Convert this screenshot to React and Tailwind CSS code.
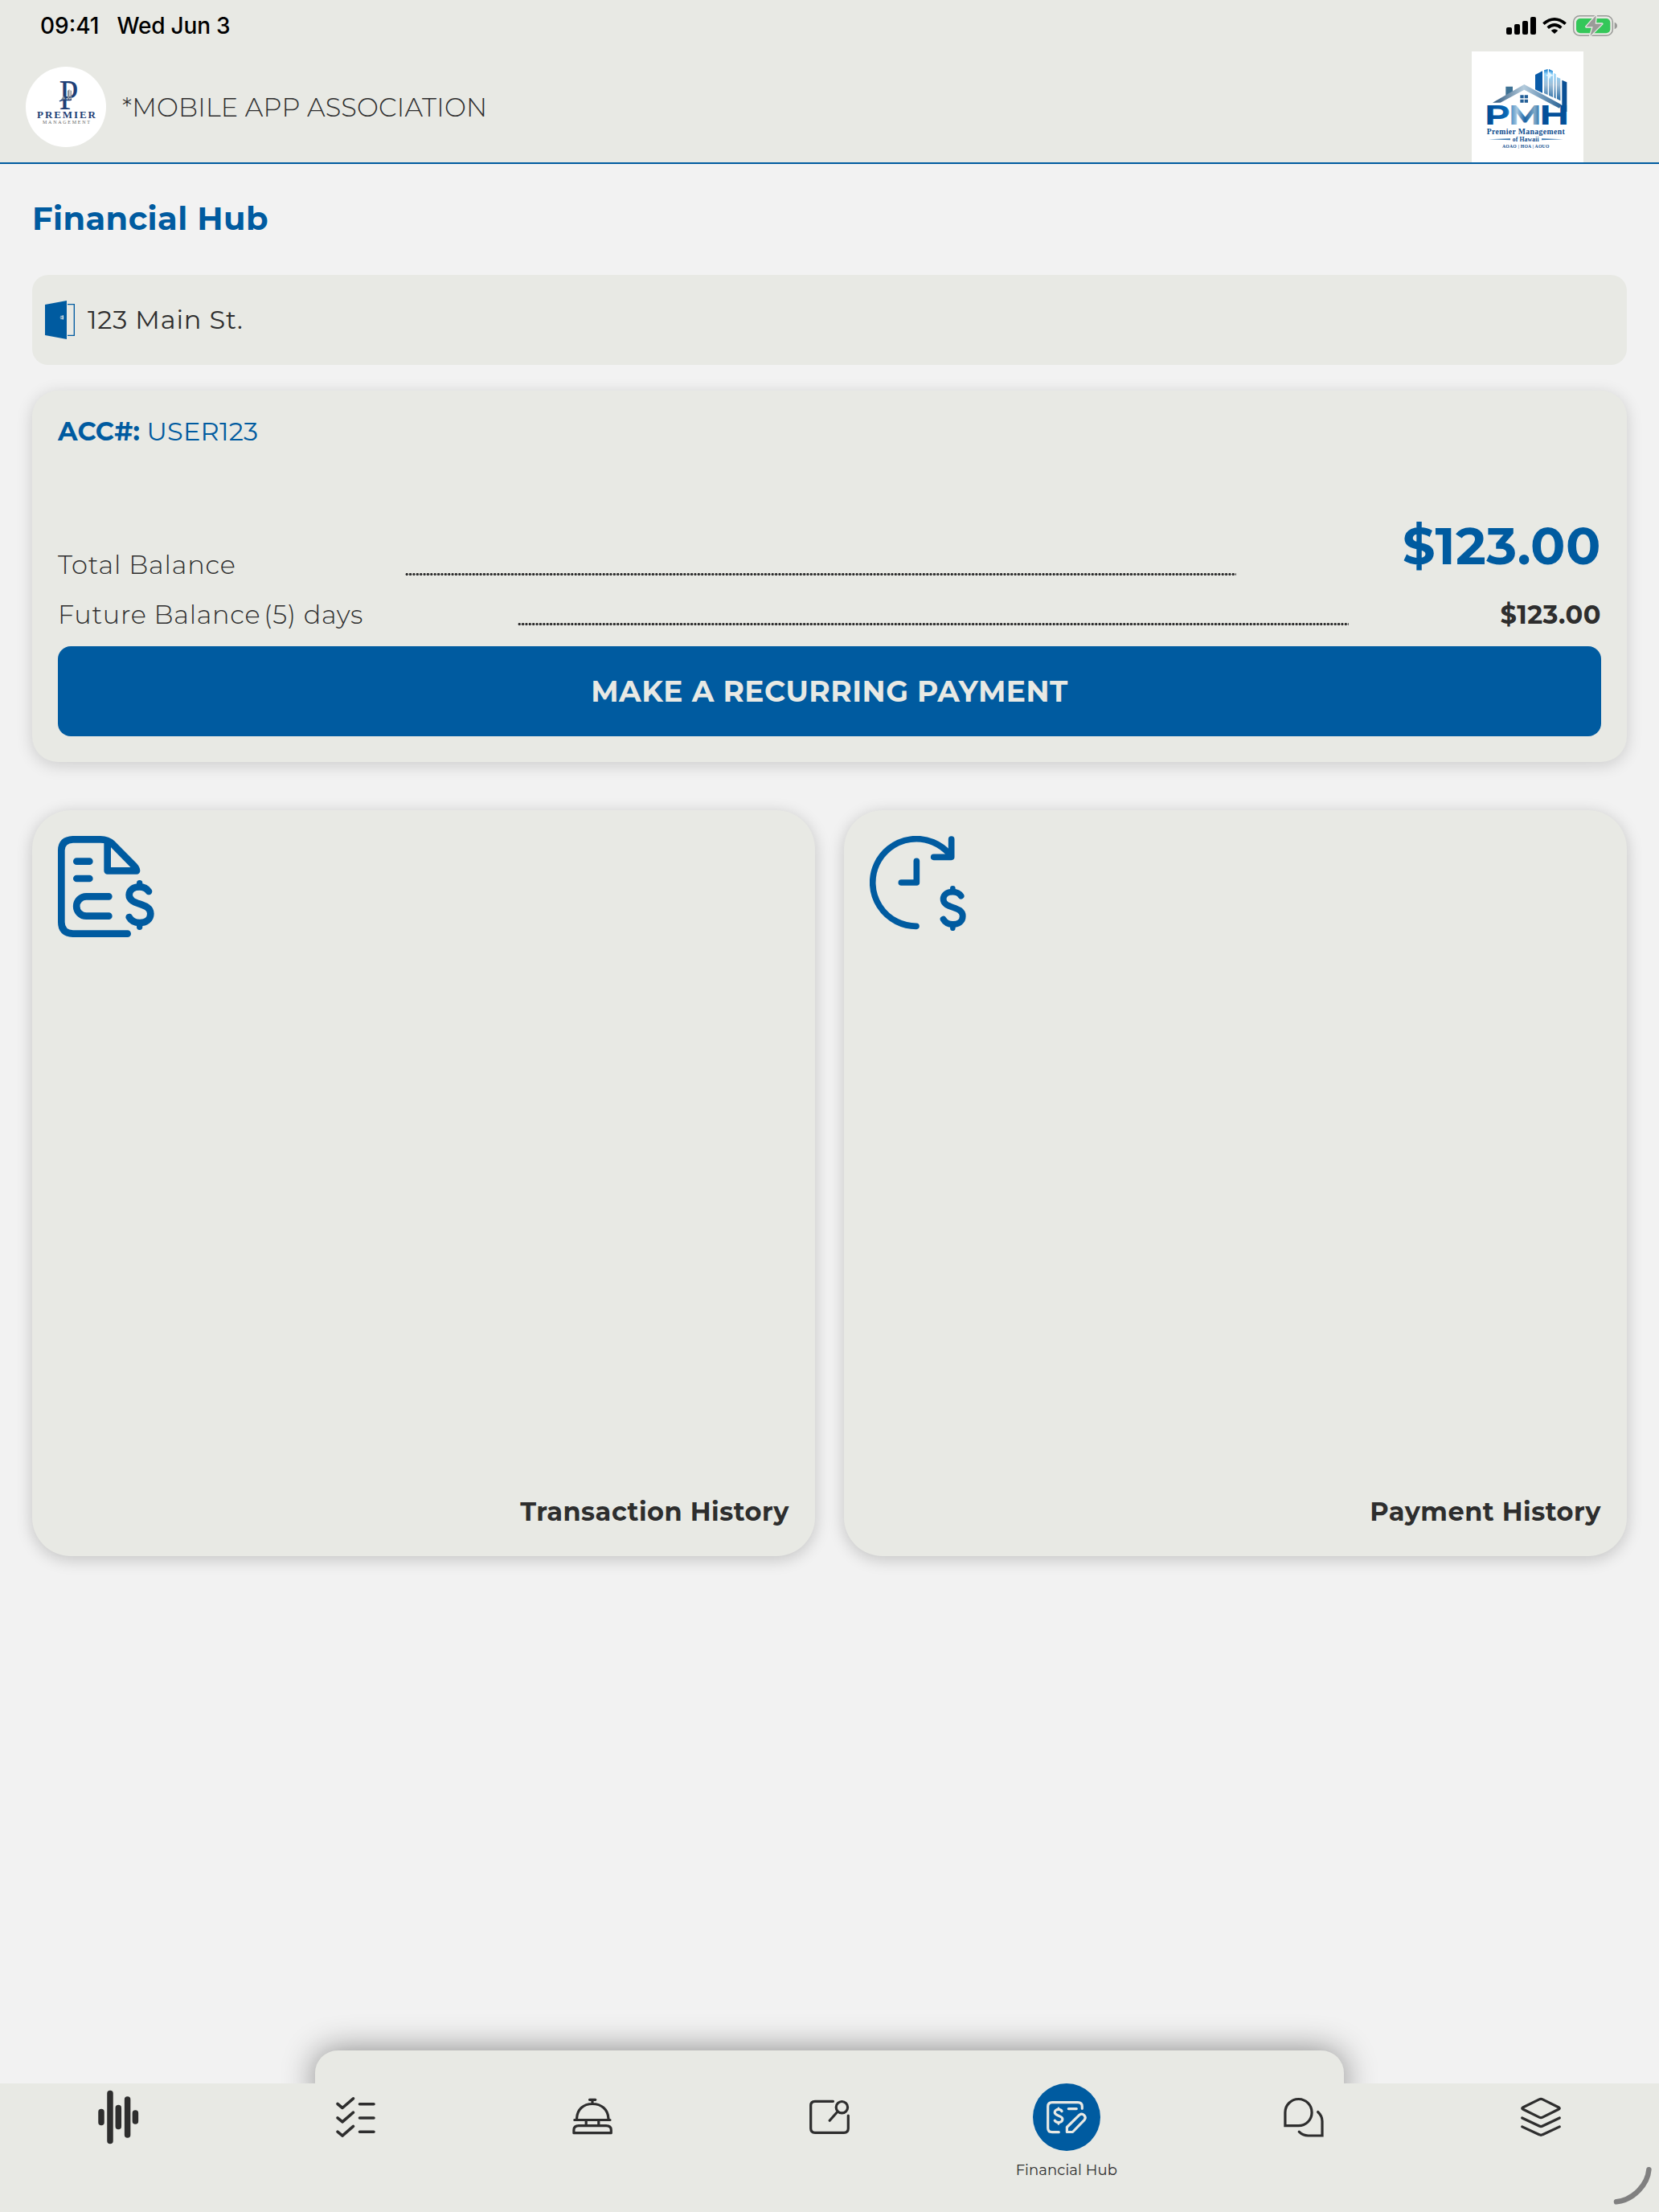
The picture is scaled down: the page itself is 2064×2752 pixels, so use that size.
import React, { useState } from "react";

const StatusIcons = () => (
  <svg className="h-8 w-[138px]" viewBox="282 48 414 96" fill="none">
    <g fill="#000">
      <rect x="282" y="102" width="21" height="27" rx="6" />
      <rect x="312" y="90" width="21" height="39" rx="6" />
      <rect x="342" y="78" width="21" height="51" rx="6" />
      <rect x="372" y="63" width="21" height="66" rx="6" />
      <path d="M449 114q13-11 26 0l-13 12z" />
    </g>
    <g stroke="#000" strokeWidth="11">
      <path d="M421 89q41-35 82 0" />
      <path d="M437 104q25-22 50 0" />
    </g>
    <rect x="533" y="59" width="146" height="74" rx="23" stroke="#9a9b98" strokeWidth="4.5" />
    <rect x="543" y="69" width="127" height="55" rx="15" fill="#34c759" />
    <path d="M686 83q10 4 10 13t-10 13z" fill="#9a9b98" />
    <path
      d="M617 58L580 100h25l-10 34 45-45h-26z"
      fill="#9a9b98"
      stroke="#e8e9e4"
      strokeWidth="8"
      paintOrder="stroke"
      strokeLinejoin="round"
    />
  </svg>
);

const PremierLogo = () => (
  <svg className="size-[100px] rounded-full bg-white" viewBox="0 0 100 100">
    <g fill="#1f3f77" fontFamily="Liberation Serif, serif">
      <text x="41.500" y="52.500" fontSize="52" textLength="24" lengthAdjust="spacingAndGlyphs">P</text>
      <text x="14" y="64" fontSize="13" fontWeight="bold" textLength="73">PREMIER</text>
      <text x="21" y="70.500" fontSize="6" fill="#666" textLength="59">MANAGEMENT</text>
    </g>
    <path d="M52 41V30l2.500-2V41zM55.500 41V29l1.500 1v11zM44 41l3-5 3 5z" fill="#8b8f96" />
    <path d="M42 43c5-4 9 0 15-2" stroke="#1f3f77" strokeWidth="1.500" fill="none" />
  </svg>
);

const PmhLogo = () => (
  <svg className="h-[138px] w-[139px] bg-white" viewBox="153 192 417 414">
    <defs>
      <linearGradient id="roof" x1="0" x2="1">
        <stop offset="0" stopColor="#2d567c" />
        <stop offset="0.45" stopColor="#b4cbdc" />
        <stop offset="1" stopColor="#2a6496" />
      </linearGradient>
      <linearGradient id="letters" gradientUnits="userSpaceOnUse" x1="208" x2="508" y1="0" y2="0">
        <stop offset="0" stopColor="#024a94" />
        <stop offset="0.25" stopColor="#0767b5" />
        <stop offset="0.38" stopColor="#a9c8df" />
        <stop offset="0.48" stopColor="#1a62a4" />
        <stop offset="0.6" stopColor="#7fa9c6" />
        <stop offset="0.7" stopColor="#04509a" />
        <stop offset="1" stopColor="#04509a" />
      </linearGradient>
      <linearGradient id="tower" x1="0" x2="0" y1="0" y2="1">
        <stop offset="0" stopColor="#0b72c4" />
        <stop offset="0.15" stopColor="#8fd3fb" />
        <stop offset="0.5" stopColor="#9fbfd8" />
        <stop offset="1" stopColor="#256aa4" />
      </linearGradient>
    </defs>
    <path d="M390 279l27-14v82l-27-13z" fill="#0a5ba8" />
    <path d="M423 262l14-4v96l-14-6zM441 258l15 7v98l-15-7zM460 273l7 4v91l-7-4zM471 288l13 5v83l-13-7z" fill="url(#tower)" />
    <path d="M490 299l18 8v110h-18z" fill="#0a4f94" />
    <path d="M444 266l4 11 11 4-11 4-4 11-4-11-11-4 11-4z" fill="#e6f7ff" />
    <path d="M280 323h26v20l-26 17z" fill="#3d7194" />
    <path d="M231 383L349 315 488 391 480 404 349 335 260 383z" fill="url(#roof)" />
    <path d="M334 355h13v12h-13zM350 355h13v12h-13zM334 371h13v12h-13zM350 371h13v12h-13z" fill="#245f97" />
    <g
      fontFamily="Montserrat, Open Sans, sans-serif"
      fontSize="104"
      fontWeight="700"
      fill="url(#letters)"
    >
      <text x="200" y="466" textLength="97" lengthAdjust="spacingAndGlyphs">P</text>
      <text x="290" y="466" textLength="124" lengthAdjust="spacingAndGlyphs">M</text>
      <text x="405" y="466" textLength="113" lengthAdjust="spacingAndGlyphs">H</text>
    </g>
    <g fontFamily="Liberation Serif, serif" fontWeight="bold" fill="#0b4a8c">
      <text x="209" y="500" fontSize="29" textLength="291">Premier Management</text>
      <text x="305" y="527" fontSize="23" textLength="99">of Hawaii</text>
      <text x="267" y="551" fontSize="17" textLength="175">AOAO | HOA | AOUO</text>
    </g>
    <path d="M216 520l81-3v6zM495 520l-81-3v6z" fill="#3b78b0" />
  </svg>
);

const DoorIcon = () => (
  <svg className="h-12 w-[37px]" viewBox="108 132 111 144">
    <path d="M108 147l81-15v144l-81-15z" fill="#005ba0" />
    <path d="M192 146h25v116h-25" fill="none" stroke="#005ba0" strokeWidth="4" />
    <path d="M164 195h12M166 190h10v10h-10M175 186v17" fill="none" stroke="#e8e9e4" strokeWidth="2.500" />
  </svg>
);

const DollarMark = () => (
  <>
    <path d="M465 357C458 346 446 340 431 340C408 340 392 352 392 370C392 412 472 396 472 440C472 462 454 474 432 474C412 474 400 468 392 453" />
    <path d="M431 326V338M431 476V490" strokeWidth="22" />
  </>
);

const TransactionIcon = () => (
  <svg
    className="h-[126px] w-[120px]"
    viewBox="126 150 360 378"
    fill="none"
    stroke="#005ba0"
    strokeWidth="26"
    strokeLinecap="round"
    strokeLinejoin="round"
  >
    <path d="M386 515H182Q139 513 139 472V203Q140 165 182 163H285Q312 163 330 180L411 262Q420 272 420 280H311V175" />
    <path d="M196 245H244M196 309H244M316 376H232a36.500 36.500 0 0 0 0 73H316" />
    <DollarMark />
  </svg>
);

const PaymentIcon = () => (
  <svg
    className="h-[118px] w-[120px]"
    viewBox="246 150 360 354"
    fill="none"
    stroke="#005ba0"
    strokeWidth="23"
    strokeLinecap="round"
    strokeLinejoin="round"
  >
    <path d="M420 487A163 163 0 1 1 544 218" />
    <path d="M551 162V229H485M421 244V324H364" />
    <g transform="translate(166 51) scale(0.905)" strokeWidth="26">
      <DollarMark />
    </g>
  </svg>
);

const navItems = [
  {
    name: "Home",
    icon: (
      <path
        strokeWidth="7.500"
        d="M21 35.500V48.500M32 12.500V71.500M42.300 30.500V53.500M53.600 20V64M63.400 37V47"
      />
    ),
  },
  {
    name: "Tasks",
    icon: (
      <path
        strokeWidth="3.600"
        d="M20 25.500L26 30.500L39.500 18.800M20 42.800L26 47.800L39.500 36.100M20 60.100L26 65.100L39.500 53.400M47.500 25.700H65M47.500 43H65M47.500 60.300H65"
      />
    ),
  },
  {
    name: "Services",
    icon: (
      <path d="M38.500 20.300H45.800M42 20.500V25M22.500 44C23 32 31 25.500 42 25.500S61.500 32 62 44M19.800 45.500H64M34.200 46V52M49.800 46V52M18.900 61.700V58Q19 52.700 25 52.700H59Q65.300 52.700 65.300 58V61.700Z" />
    ),
  },
  {
    name: "Notes",
    icon: (
      <path d="M46.500 22.300H24Q18.700 22.300 18.700 27.600V56Q18.700 61.300 24 61.300H60Q65.300 61.300 65.300 56V40M51.700 35.500L42.200 46.300M64.600 29.700a7.200 7.200 0 1 1-14.400 0a7.200 7.200 0 1 1 14.400 0" />
    ),
  },
  {
    name: "Financial Hub",
    icon: (
      <>
        <path d="M32.300 60.700H24Q18.700 60.700 18.700 55.500V28.800Q18.700 23.600 24 23.600H56Q61.300 23.600 61.300 28.800V31.300M44.300 31.600H54.300M42.400 60.500V54.500L58 39.200Q61 37 63.800 39.600Q66.500 42.500 64.200 45.300L49.500 60.500Z" />
        <g transform="translate(-20 -8.500) scale(0.1205)" strokeWidth="27">
          <DollarMark />
        </g>
      </>
    ),
  },
  {
    name: "Messages",
    icon: (
      <path
        strokeLinejoin="miter"
        d="M18.900 52.700V35.900A16.600 16.600 0 1 1 35.500 52.700ZM59.600 35.500Q65 40.500 65 47V65H47.600Q41 65 36.200 60.200"
      />
    ),
  },
  {
    name: "More",
    icon: (
      <path d="M40 19.900Q42.100 18.900 44.200 19.900L64.500 30Q66 31 64.500 32L44.200 42.100Q42.100 43.100 40 42.100L19.500 32Q18 31 19.500 30ZM18.700 43L40 53Q42.100 54.200 44.200 53L65.300 43M18.700 53.900L40 63.700Q42.100 64.900 44.200 63.700L65.300 53.900" />
    ),
  },
];

const DottedLine = () => (
  <div className="mb-[7px] ml-[3px] h-[3px] w-[1034px] bg-[radial-gradient(circle,#2e2e2e_1.4px,transparent_2px)] bg-[length:4.38px_3px]"></div>
);

const HistoryCard = ({ title, icon }) => (
  <button className="flex h-[928px] flex-col justify-between rounded-[48px] bg-[#e8e9e4] p-8 shadow-[0_4px_20px_rgba(0,0,0,0.2)]">
    {icon}
    <span className="self-end text-[32px] leading-[46px] font-bold tracking-[0.5px]">
      {title}
    </span>
  </button>
);

const App = () => {
  const [activeTab, setActiveTab] = useState("Financial Hub");

  return (
    <div className="flex h-[2752px] w-[2064px] flex-col overflow-hidden bg-[#f2f2f2] font-['Montserrat','Inter',sans-serif] text-[#2e2e2e]">
      <header className="border-b-2 border-[#005ba0] bg-[#e8e9e4]">
        <div className="flex h-16 items-center justify-between pr-[52px] pl-[50px] font-['Inter',sans-serif] text-[28px] font-medium text-black">
          <div className="flex gap-[22px]">
            <span>09:41</span>
            <span className="tracking-[-0.2px]">Wed Jun 3</span>
          </div>
          <StatusIcons />
        </div>
        <div className="flex h-[138px] items-center pr-[94px] pl-8">
          <PremierLogo />
          <h1 className="ml-5 flex-1 pt-0.5 text-[32px] font-light tracking-[0.2px]">
            *MOBILE APP ASSOCIATION
          </h1>
          <PmhLogo />
        </div>
      </header>

      <main className="flex-1 px-10">
        <h2 className="h-[138px] text-[40px] leading-[136px] font-bold tracking-[0.4px] text-[#005ba0]">
          Financial Hub
        </h2>

        <div className="flex h-28 items-center gap-4 rounded-[20px] bg-[#e8e9e4] px-4 text-[32px]">
          <DoorIcon />
          <span className="tracking-[0.8px]">123 Main St.</span>
        </div>

        <section className="mt-8 rounded-[32px] bg-[#e8e9e4] p-8 shadow-[0_4px_20px_rgba(0,0,0,0.16)]">
          <p className="text-[32px] leading-[38px] tracking-[0.2px] text-[#005ba0]">
            <span className="font-bold">ACC#:</span> <span>USER123</span>
          </p>
          <div className="mt-[84px] flex h-[83px] items-end justify-between">
            <span className="text-[32px] leading-[40px] font-light tracking-[0.8px]">
              Total Balance
            </span>
            <DottedLine />
            <span className="self-start text-[64px] leading-[79px] font-bold tracking-[0.5px] text-[#005ba0]">
              $123.00
            </span>
          </div>
          <div className="mt-[22px] flex items-end justify-between text-[32px] leading-[40px]">
            <span className="flex gap-1 font-light tracking-[0.7px]">
              <span>Future Balance</span>
              <span>(5) days</span>
            </span>
            <DottedLine />
            <span className="font-bold tracking-[0.5px]">$123.00</span>
          </div>
          <button className="mt-[19px] h-28 w-full rounded-2xl bg-[#005ba0] text-[36px] font-bold tracking-[0.5px] text-[#e8e9e4]">
            MAKE A RECURRING PAYMENT
          </button>
        </section>

        <div className="mt-[60px] grid grid-cols-2 gap-9">
          <HistoryCard title="Transaction History" icon={<TransactionIcon />} />
          <HistoryCard title="Payment History" icon={<PaymentIcon />} />
        </div>
      </main>

      <div className="mx-auto -mb-5 h-[61px] w-[1280px] rounded-t-[28px] bg-[#e8e9e4] shadow-[0_0_40px_rgba(0,0,0,0.45)]"></div>
      <nav className="relative grid h-40 grid-cols-7 bg-[#e8e9e4]">
        {navItems.map((item) => {
          const active = item.name === activeTab;
          return (
            <button
              key={item.name}
              onClick={() => setActiveTab(item.name)}
              className="flex flex-col items-center"
            >
              <svg
                className={active ? "size-[84px] rounded-full bg-[#005ba0]" : "size-[84px]"}
                viewBox="0 0 84 84"
                fill="none"
                stroke={active ? "#e8e9e4" : "#2e2e2e"}
                strokeWidth="3.200"
                strokeLinecap="round"
                strokeLinejoin="round"
              >
                {item.icon}
              </svg>
              {active && <span className="mt-3 text-[18px] leading-6 tracking-[0.1px]">{item.name}</span>}
            </button>
          );
        })}
        <svg className="absolute right-0 bottom-0 h-16 w-16" viewBox="2000 2688 64 64" fill="none">
          <path
            d="M2011 2739.300C2033 2737 2050 2717 2051.400 2699.300"
            stroke="#808080"
            strokeWidth="6.500"
            strokeLinecap="round"
          />
        </svg>
      </nav>
    </div>
  );
};

export default App;
